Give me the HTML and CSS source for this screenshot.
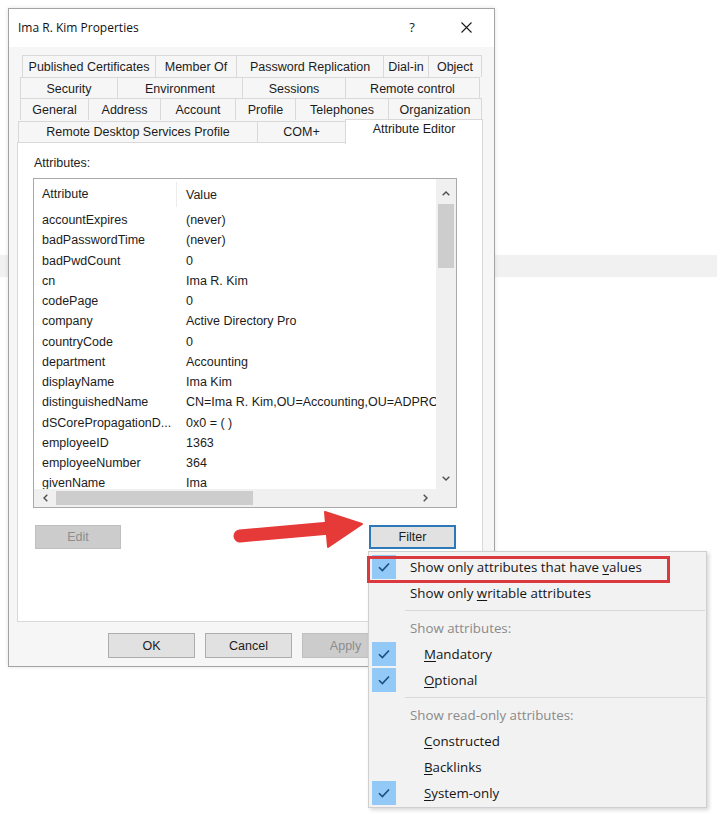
FILE: index.html
```html
<!DOCTYPE html>
<html lang="en">
<head>
    <meta charset="UTF-8">
    <meta name="viewport" content="width=device-width, initial-scale=1.0">
    <title>Ima R. Kim Properties</title>
    <link rel="stylesheet" href="styles.css">
</head>
<body>
    <div class="band"></div>

    <div class="dialog">
        <div class="titlebar">
            <span class="title">Ima R. Kim Properties</span>
            <span class="tb-btn help">?</span>
            <span class="tb-btn close">
                <svg width="11" height="11" viewBox="0 0 11 11"><path d="M0.5 0.5L10.5 10.5M10.5 0.5L0.5 10.5" stroke="#1a1a1a" stroke-width="1.1" fill="none"/></svg>
            </span>
        </div>

        <div class="tabs">
            <div class="tab-row row-1">
                <div class="tab">Published Certificates</div>
                <div class="tab">Member Of</div>
                <div class="tab">Password Replication</div>
                <div class="tab">Dial-in</div>
                <div class="tab">Object</div>
            </div>
            <div class="tab-row row-2">
                <div class="tab">Security</div>
                <div class="tab">Environment</div>
                <div class="tab">Sessions</div>
                <div class="tab">Remote control</div>
            </div>
            <div class="tab-row row-3">
                <div class="tab">General</div>
                <div class="tab">Address</div>
                <div class="tab">Account</div>
                <div class="tab">Profile</div>
                <div class="tab">Telephones</div>
                <div class="tab">Organization</div>
            </div>
            <div class="tab-row row-4">
                <div class="tab">Remote Desktop Services Profile</div>
                <div class="tab">COM+</div>
                <div class="tab selected">Attribute Editor</div>
            </div>
        </div>

        <div class="page">
            <div class="label">Attributes:</div>
            <div class="listbox">
                <div class="list-view">
                    <div class="list-head">
                        <span class="col-name">Attribute</span>
                        <span class="col-value">Value</span>
                    </div>
                    <div class="list-row"><span class="col-name">accountExpires</span><span class="col-value">(never)</span></div>
                    <div class="list-row"><span class="col-name">badPasswordTime</span><span class="col-value">(never)</span></div>
                    <div class="list-row"><span class="col-name">badPwdCount</span><span class="col-value">0</span></div>
                    <div class="list-row"><span class="col-name">cn</span><span class="col-value">Ima R. Kim</span></div>
                    <div class="list-row"><span class="col-name">codePage</span><span class="col-value">0</span></div>
                    <div class="list-row"><span class="col-name">company</span><span class="col-value">Active Directory Pro</span></div>
                    <div class="list-row"><span class="col-name">countryCode</span><span class="col-value">0</span></div>
                    <div class="list-row"><span class="col-name">department</span><span class="col-value">Accounting</span></div>
                    <div class="list-row"><span class="col-name">displayName</span><span class="col-value">Ima Kim</span></div>
                    <div class="list-row"><span class="col-name">distinguishedName</span><span class="col-value">CN=Ima R. Kim,OU=Accounting,OU=ADPRO Users,DC=ad,DC=activedirectorypro,DC=com</span></div>
                    <div class="list-row"><span class="col-name">dSCorePropagationD...</span><span class="col-value">0x0 = ( )</span></div>
                    <div class="list-row"><span class="col-name">employeeID</span><span class="col-value">1363</span></div>
                    <div class="list-row"><span class="col-name">employeeNumber</span><span class="col-value">364</span></div>
                    <div class="list-row"><span class="col-name">givenName</span><span class="col-value">Ima</span></div>
                </div>

                <div class="vscroll">
                    <div class="sb-arrow"><svg width="8" height="5" viewBox="0 0 8 5"><path d="M0.7 4.3L4 1L7.3 4.3" stroke="#505050" stroke-width="1.4" fill="none"/></svg></div>
                    <div class="sb-track"><div class="v-thumb"></div></div>
                    <div class="sb-arrow"><svg width="8" height="5" viewBox="0 0 8 5"><path d="M0.7 0.7L4 4L7.3 0.7" stroke="#505050" stroke-width="1.4" fill="none"/></svg></div>
                </div>
                <div class="hscroll">
                    <div class="sb-arrow"><svg width="5" height="8" viewBox="0 0 5 8"><path d="M4.3 0.7L1 4L4.3 7.3" stroke="#505050" stroke-width="1.4" fill="none"/></svg></div>
                    <div class="sb-track"><div class="h-thumb"></div></div>
                    <div class="sb-arrow"><svg width="5" height="8" viewBox="0 0 5 8"><path d="M0.7 0.7L4 4L0.7 7.3" stroke="#505050" stroke-width="1.4" fill="none"/></svg></div>
                </div>
                <div class="corner"></div>
            </div>

            <div class="page-actions">
                <button class="btn edit" disabled>Edit</button>
                <button class="btn filter">Filter</button>
            </div>
        </div>

        <div class="dialog-buttons">
            <button class="btn">OK</button>
            <button class="btn">Cancel</button>
            <button class="btn" disabled>Apply</button>
        </div>
    </div>

    <!-- red pointer towards the Filter button -->
    <svg class="pointer" width="140" height="50" viewBox="0 0 140 50">
        <path d="M12 31L102 23" stroke="#e53a38" stroke-width="13" stroke-linecap="round"/>
        <path d="M97 7L134 19L100 42Z" fill="#e53a38" stroke="#e53a38" stroke-width="2" stroke-linejoin="round"/>
    </svg>

    <div class="menu">
        <span class="menu-mark"></span>
        <div class="item">
            <span class="check on"><svg width="12" height="10" viewBox="0 0 12 10"><path d="M1 5.2L4.4 8.5L11 1.5" stroke="#1b4d86" stroke-width="1.6" fill="none"/></svg></span>
            <span class="text">Show only attributes that have <u>v</u>alues</span>
        </div>
        <div class="item">
            <span class="check"></span>
            <span class="text">Show only <u>w</u>ritable attributes</span>
        </div>
        <div class="sep"></div>
        <div class="item">
            <span class="check"></span>
            <span class="text muted">Show attributes:</span>
        </div>
        <div class="item">
            <span class="check on"><svg width="12" height="10" viewBox="0 0 12 10"><path d="M1 5.2L4.4 8.5L11 1.5" stroke="#1b4d86" stroke-width="1.6" fill="none"/></svg></span>
            <span class="text sub"><u>M</u>andatory</span>
        </div>
        <div class="item">
            <span class="check on"><svg width="12" height="10" viewBox="0 0 12 10"><path d="M1 5.2L4.4 8.5L11 1.5" stroke="#1b4d86" stroke-width="1.6" fill="none"/></svg></span>
            <span class="text sub"><u>O</u>ptional</span>
        </div>
        <div class="sep"></div>
        <div class="item">
            <span class="check"></span>
            <span class="text muted">Show read-only attributes:</span>
        </div>
        <div class="item">
            <span class="check"></span>
            <span class="text sub"><u>C</u>onstructed</span>
        </div>
        <div class="item">
            <span class="check"></span>
            <span class="text sub"><u>B</u>acklinks</span>
        </div>
        <div class="item">
            <span class="check on"><svg width="12" height="10" viewBox="0 0 12 10"><path d="M1 5.2L4.4 8.5L11 1.5" stroke="#1b4d86" stroke-width="1.6" fill="none"/></svg></span>
            <span class="text sub"><u>S</u>ystem-only</span>
        </div>
    </div>
</body>
</html>
```

FILE: styles.css
```css
body {
    margin: 0;
    background-color: #fff;
    font-family: "Liberation Sans", Arial, sans-serif;
    font-size: 12.5px;
    color: #1c1c1c;
}

/* light strip running behind the window */
.band {
    margin-top: 255px;
    width: 717px;
    height: 22px;
    background-color: #f1f1f1;
}

.dialog {
    position: absolute;
    left: 8px;
    top: 8px;
    width: 487px;
    height: 659px;
    box-sizing: border-box;
    border: 1px solid #a3a3a3;
    background-color: #f6f6f6;
    box-shadow: 0 0 4px rgba(0, 0, 0, 0.12);
    display: flex;
    flex-direction: column;
}

.titlebar {
    height: 38px;
    display: flex;
    align-items: center;
    background-color: #fff;
    padding-left: 9px;
}
.title {
    flex: 1;
    font-family: "Open Sans", sans-serif;
    font-size: 12px;
    color: #111;
    margin-top: -2px;
}
.tb-btn {
    width: 54px;
    height: 38px;
    display: flex;
    align-items: center;
    justify-content: center;
    margin-top: -2px;
}
.help {
    font-family: "Open Sans", sans-serif;
    font-size: 13px;
}
.close {
    margin-right: 1px;
}

/* multi-row tab strip */
.tabs {
    padding-top: 8px;
}
.tab-row {
    display: grid;
    height: 21.5px;
}
.row-1 { grid-template-columns: 133px 81px 147px 45px 54px; margin-left: 13px; }
.row-2 { grid-template-columns: 97px 125px 103px 135px; margin-left: 11px; }
.row-3 { grid-template-columns: 68px 72px 75px 60px 93px 94px; margin-left: 11px; }
.row-4 { grid-template-columns: 239px 88px 138px; margin-left: 9px; height: 22.5px; }

.tab {
    border-top: 1px solid #d9d9d9;
    border-left: 1px solid #d9d9d9;
    background-color: #f6f6f6;
    text-align: center;
    padding-top: 2px;
    line-height: 19px;
    white-space: nowrap;
}
.tab:last-child {
    border-right: 1px solid #d9d9d9;
}
.row-4 .tab {
    margin-top: 1px;
    padding-top: 1px;
}
.row-4 .tab.selected {
    margin-top: -1px;
    height: 24.5px;
    padding-top: 0;
    background-color: #fff;
    position: relative;
    z-index: 1;
}

.page {
    margin-left: 8px;
    width: 466px;
    height: 480px;
    box-sizing: border-box;
    border: 1px solid #d9d9d9;
    background-color: #fff;
    padding: 13px 0 0 15px;
}
.label {
    line-height: 14px;
    padding-left: 1px;
}

.listbox {
    margin-top: 8px;
    width: 424px;
    height: 330px;
    box-sizing: border-box;
    border: 1px solid #a9a9a9;
    display: grid;
    grid-template-columns: 402px 20px;
    grid-template-rows: 310px 18px;
}
.list-view {
    overflow: hidden;
}
.list-head,
.list-row {
    display: flex;
    white-space: nowrap;
}
.list-head {
    height: 31px;
    align-items: center;
}
.list-row {
    height: 20.25px;
    line-height: 20.25px;
}
.col-name {
    flex: none;
    width: 143px;
    box-sizing: border-box;
    padding-left: 8px;
    overflow: hidden;
}
.col-value {
    padding-left: 9px;
}
.list-head .col-name {
    border-right: 1px solid #ececec;
    line-height: 25px;
}

.vscroll,
.hscroll {
    display: flex;
    background-color: #f0f0f0;
}
.vscroll {
    flex-direction: column;
}
.sb-arrow {
    flex: none;
    display: flex;
    align-items: center;
    justify-content: center;
}
.vscroll .sb-arrow { height: 22px; }
.vscroll .sb-arrow:first-child { padding-top: 3px; }
.hscroll .sb-arrow { width: 22px; }
.sb-track {
    flex: 1;
    display: flex;
}
.vscroll .sb-track { flex-direction: column; }
.v-thumb {
    margin: 0 2px;
    height: 64px;
    background-color: #cdcdcd;
}
.h-thumb {
    margin: 2px 0;
    width: 197px;
    background-color: #cdcdcd;
}
.corner {
    background-color: #f0f0f0;
}

.btn {
    width: 87px;
    height: 25px;
    padding: 0;
    box-sizing: border-box;
    border: 1px solid #adadad;
    background-color: #e1e1e1;
    font-family: "Liberation Sans", Arial, sans-serif;
    font-size: 12.5px;
    color: #1c1c1c;
}
.btn:disabled {
    background-color: #cccccc;
    border-color: #bfbfbf;
    color: #8d8d8d;
}

.page-actions {
    margin-top: 17px;
    display: flex;
    justify-content: space-between;
    padding: 0 26px 0 2px;
}
.edit {
    width: 86px;
    height: 24px;
}
.filter {
    height: 24px;
    border: 2px solid #2d78b6;
}

/* the Help button of this row sits under the open menu */
.dialog-buttons {
    margin-top: 11px;
    display: flex;
    justify-content: flex-end;
    gap: 10px;
    padding-right: 105px;
}

.pointer {
    position: absolute;
    left: 228px;
    top: 505px;
}

/* Filter drop-down menu */
.menu {
    position: absolute;
    left: 368px;
    top: 551px;
    width: 339px;
    height: 257px;
    box-sizing: border-box;
    border: 1px solid #cfcfcf;
    background-color: #f2f2f2;
    box-shadow: 2px 2px 4px rgba(0, 0, 0, 0.16);
    padding: 2px 0 1px;
    font-family: "Open Sans", sans-serif;
    font-size: 13.3px;
    color: #151515;
}
.menu-mark {
    position: absolute;
    left: -2px;
    top: 4px;
    width: 303px;
    height: 27px;
    box-sizing: border-box;
    border: 3px solid #d9393f;
}
.item {
    display: flex;
    align-items: center;
    height: 26px;
}
.check {
    flex: none;
    width: 24px;
    height: 24px;
    margin: 0 14px 0 3px;
    display: flex;
    align-items: center;
    justify-content: center;
}
.check.on {
    background-color: #93c9f6;
}
.text {
    white-space: nowrap;
}
.text.sub {
    padding-left: 14px;
}
.text.muted {
    color: #8a8a8a;
}
.text u {
    text-underline-offset: 2px;
}
.sep {
    height: 9px;
    margin: 0 1px 0 36px;
    display: flex;
    align-items: center;
}
.sep::after {
    content: "";
    flex: 1;
    height: 1px;
    background-color: #d9d9d9;
}
```
